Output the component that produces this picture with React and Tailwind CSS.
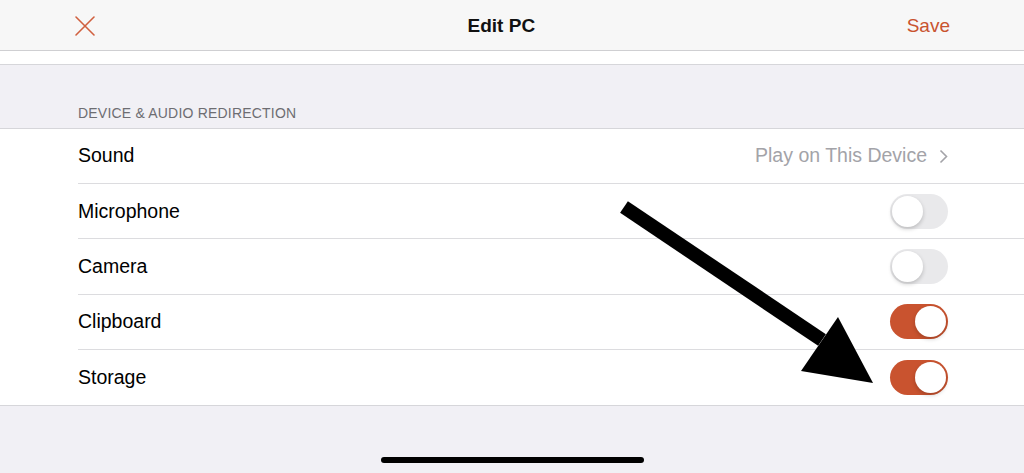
import React from 'react';

const font = { fontFamily: '"Liberation Sans", Arial, sans-serif' };

const Toggle = ({ on }) => (
  <div
    className={`relative w-[58px] h-[35px] rounded-full ${on ? 'bg-[#c9532f]' : 'bg-[#e9e9eb]'}`}
  >
    <div
      className={`absolute top-[2px] w-[31px] h-[31px] rounded-full bg-white shadow-[0_2px_4px_rgba(0,0,0,0.2)] ${on ? 'right-[2px]' : 'left-[2px]'}`}
    />
  </div>
);

const Row = ({ label, children, last }) => (
  <div className="pl-[78px]">
    <div className={`h-[55.2px] flex items-center justify-between pr-[76px] ${last ? '' : 'border-b border-[#dcdcdf]'}`}>
      <span className="text-[19.5px] text-black">{label}</span>
      {children}
    </div>
  </div>
);

const App = () => {
  return (
    <div className="relative w-[1024px] h-[473px] overflow-hidden bg-[#f1f0f5]" style={font}>
      {/* nav bar */}
      <div className="h-[51px] bg-[#f7f7f7] border-b border-[#cfcfd2] flex items-center justify-between px-[74px] pt-[2px]">
        <svg width="22" height="22" viewBox="0 0 22 22">
          <path d="M2 2 L20 20 M20 2 L2 20" stroke="#d0603f" strokeWidth="1.6" strokeLinecap="round" />
        </svg>
        <span className="text-[19px] font-bold text-[#111]">Edit PC</span>
        <span className="text-[19px] text-[#c9532f]">Save</span>
      </div>
      <div className="h-[14px] bg-white border-b border-[#d6d6da]" />

      <div className="h-[63px] flex items-end pl-[78px] pb-[4px]">
        <span className="text-[14px] text-[#6d6d72] tracking-[0.2px]">DEVICE &amp; AUDIO REDIRECTION</span>
      </div>

      <div className="bg-white border-t border-b border-[#d6d6da]">
        <Row label="Sound">
          <span className="flex items-center gap-[12px] text-[19.5px] text-[#a3a3a8]">
            Play on This Device
            <svg width="9" height="15" viewBox="0 0 9 15">
              <path d="M1.5 1.5 L7.5 7.5 L1.5 13.5" fill="none" stroke="#a3a3a8" strokeWidth="1.6" />
            </svg>
          </span>
        </Row>
        <Row label="Microphone">
          <Toggle on={false} />
        </Row>
        <Row label="Camera">
          <Toggle on={false} />
        </Row>
        <Row label="Clipboard">
          <Toggle on />
        </Row>
        <Row label="Storage" last>
          <Toggle on />
        </Row>
      </div>

      {/* home indicator */}
      <div className="flex justify-center mt-[51px]">
        <div className="w-[263px] h-[6px] rounded-full bg-black" />
      </div>

      {/* annotation arrow */}
      <svg className="absolute left-0 top-0 pointer-events-none" width="1024" height="473">
        <line x1="624" y1="207" x2="822" y2="340" stroke="black" strokeWidth="14" />
        <polygon points="838,317 801,371 873,383" fill="black" />
      </svg>
    </div>
  );
};

export default App;
